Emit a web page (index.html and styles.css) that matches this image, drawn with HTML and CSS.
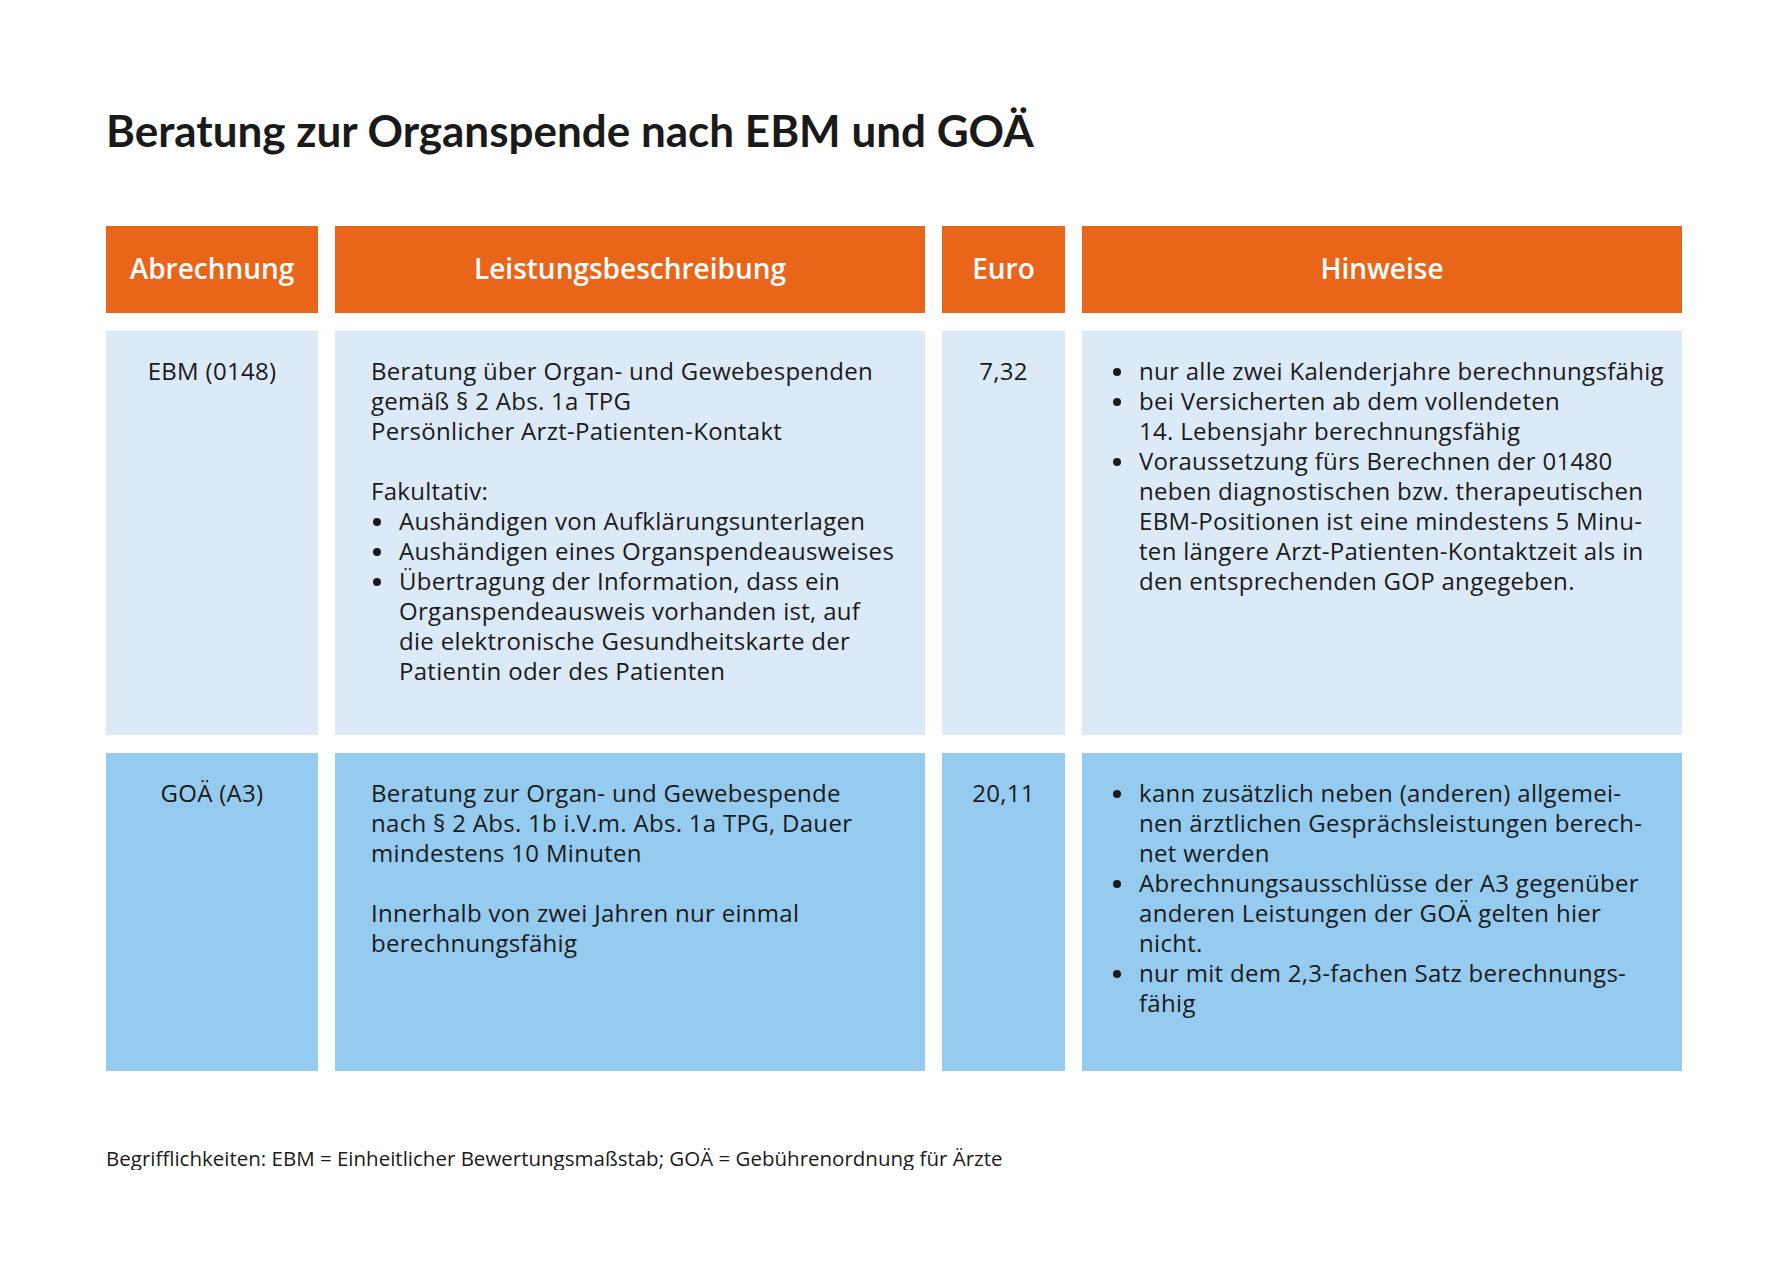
FILE: index.html
```html
<!DOCTYPE html>
<html lang="de">
<head>
<meta charset="utf-8">
<title>Beratung zur Organspende nach EBM und GOÄ</title>
<link rel="stylesheet" href="styles.css">
</head>
<body>
<main class="page">
  <h1 class="title">Beratung zur Organspende nach EBM und GOÄ</h1>
  <div class="table">
    <div class="cell head">Abrechnung</div>
    <div class="cell head">Leistungsbeschreibung</div>
    <div class="cell head">Euro</div>
    <div class="cell head">Hinweise</div>

    <div class="cell light center">EBM (0148)</div>
    <div class="cell light text">
      <p>Beratung über Organ- und Gewebespenden<br>gemäß § 2 Abs. 1a TPG<br>Persönlicher Arzt-Patienten-Kontakt</p>
      <p class="gap">Fakultativ:</p>
      <ul class="list">
        <li>Aushändigen von Aufklärungsunterlagen</li>
        <li>Aushändigen eines Organspendeausweises</li>
        <li>Übertragung der Information, dass ein<br>Organspendeausweis vorhanden ist, auf<br>die elektronische Gesundheitskarte der<br>Patientin oder des Patienten</li>
      </ul>
    </div>
    <div class="cell light center num">7,32</div>
    <div class="cell light notes">
      <ul class="list">
        <li>nur alle zwei Kalenderjahre berechnungsfähig</li>
        <li>bei Versicherten ab dem vollendeten<br>14. Lebensjahr berechnungsfähig</li>
        <li>Voraussetzung fürs Berechnen der 01480<br>neben diagnostischen bzw. therapeutischen<br>EBM-Positionen ist eine mindestens 5 Minu-<br>ten längere Arzt-Patienten-Kontaktzeit als in<br>den entsprechenden GOP angegeben.</li>
      </ul>
    </div>

    <div class="cell dark center">GOÄ (A3)</div>
    <div class="cell dark text">
      <p>Beratung zur Organ- und Gewebespende<br>nach § 2 Abs. 1b i.V.m. Abs. 1a TPG, Dauer<br>mindestens 10 Minuten</p>
      <p class="gap">Innerhalb von zwei Jahren nur einmal<br>berechnungsfähig</p>
    </div>
    <div class="cell dark center num">20,11</div>
    <div class="cell dark notes">
      <ul class="list">
        <li>kann zusätzlich neben (anderen) allgemei-<br>nen ärztlichen Gesprächsleistungen berech-<br>net werden</li>
        <li>Abrechnungsausschlüsse der A3 gegenüber<br>anderen Leistungen der GOÄ gelten hier<br>nicht.</li>
        <li>nur mit dem 2,3-fachen Satz berechnungs-<br>fähig</li>
      </ul>
    </div>
  </div>
  <p class="footnote">Begrifflichkeiten: EBM = Einheitlicher Bewertungsmaßstab; GOÄ = Gebührenordnung für Ärzte</p>
</main>
</body>
</html>
```
FILE: styles.css
```css
html, body {
  margin: 0;
  padding: 0;
  background: #ffffff;
}
body {
  font-family: "Open Sans", Lato, "DejaVu Sans", sans-serif;
  color: #1a1a1a;
}
.page {
  padding: 104px 0 0 106px;
}
.title {
  margin: 0;
  font-family: Lato, "Open Sans", sans-serif;
  font-size: 44px;
  font-weight: 700;
  line-height: 52px;
  letter-spacing: 0;
}
.table {
  margin-top: 70px;
  display: grid;
  grid-template-columns: 212px 590px 123px 600px;
  grid-template-rows: 87px 404px 318px;
  column-gap: 17px;
  row-gap: 18px;
}
.cell {
  box-sizing: border-box;
  font-size: 24px;
  line-height: 30px;
  letter-spacing: 0.3px;
}
.head {
  background: #e9651a;
  color: #ffffff;
  font-weight: 600;
  font-size: 28px;
  letter-spacing: 0;
  display: flex;
  align-items: center;
  justify-content: center;
  padding-bottom: 3px;
}
.light { background: #dceaf8; }
.dark { background: #94cbef; }
.center {
  text-align: center;
  padding-top: 25px;
}
.text {
  padding: 25px 10px 0 36px;
}
.notes {
  padding: 25px 6px 0 29px;
}
.text p { margin: 0; }
.text p.gap { margin-top: 30px; }
.list {
  margin: 0;
  padding: 0;
  list-style: none;
}
.list li {
  position: relative;
  padding-left: 28px;
}
.list li::before {
  content: "";
  position: absolute;
  left: 2px;
  top: 12px;
  width: 8px;
  height: 8px;
  border-radius: 50%;
  background: #1a1a1a;
}
.footnote {
  margin: 75px 0 0;
  font-size: 20.5px;
  line-height: 24px;
}
```
